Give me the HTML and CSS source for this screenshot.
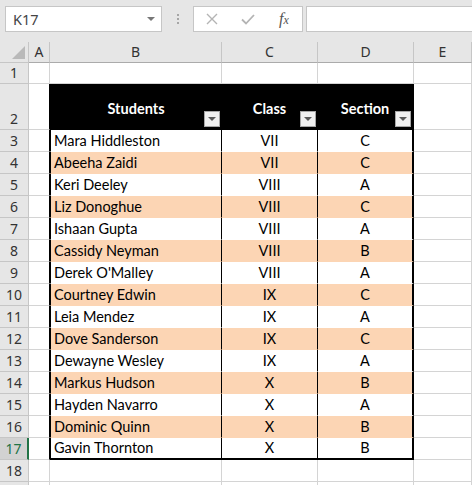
FILE: index.html
```html
<!DOCTYPE html>
<html>
<head>
<meta charset="utf-8">
<link rel="stylesheet" href="styles.css">
</head>
<body>
<div class="toolbar">
  <div class="namebox"><span class="nb-text">K17</span><span class="nb-arrow"></span></div>
  <div class="sep"><span></span><span></span><span></span></div>
  <div class="fbtns">
    <svg class="ico" width="12" height="12" viewBox="0 0 12 12"><path d="M1 1 L11 11 M11 1 L1 11" stroke="#b4b4b4" stroke-width="1.4" fill="none"/></svg>
    <svg class="ico" width="14" height="12" viewBox="0 0 14 12"><path d="M1 6.5 L5 10.5 L13 2" stroke="#b4b4b4" stroke-width="1.8" fill="none"/></svg>
    <span class="fx">f<span class="fx-x">x</span></span>
  </div>
  <div class="formula"></div>
</div>
<div class="sheet">
  <div class="row hdr">
    <div class="rh corner"><span class="tri"></span></div>
    <div class="ch">A</div><div class="ch">B</div><div class="ch">C</div><div class="ch">D</div><div class="ch">E</div>
  </div>
  <div class="row r1">
    <div class="rh">1</div><div class="c"></div><div class="c"></div><div class="c"></div><div class="c"></div><div class="c"></div>
  </div>
  <div class="row r2">
    <div class="rh">2</div><div class="c edge"></div>
    <div class="c th tb">Students<span class="dd"></span></div>
    <div class="c th tc">Class<span class="dd"></span></div>
    <div class="c th td">Section<span class="dd"></span></div>
    <div class="c"></div>
  </div>
  <div class="row"><div class="rh">3</div><div class="c edge"></div><div class="c t tb">Mara Hiddleston</div><div class="c t tc">VII</div><div class="c t td">C</div><div class="c"></div></div>
  <div class="row alt"><div class="rh">4</div><div class="c edge"></div><div class="c t tb">Abeeha Zaidi</div><div class="c t tc">VII</div><div class="c t td">C</div><div class="c"></div></div>
  <div class="row"><div class="rh">5</div><div class="c edge"></div><div class="c t tb">Keri Deeley</div><div class="c t tc">VIII</div><div class="c t td">A</div><div class="c"></div></div>
  <div class="row alt"><div class="rh">6</div><div class="c edge"></div><div class="c t tb">Liz Donoghue</div><div class="c t tc">VIII</div><div class="c t td">C</div><div class="c"></div></div>
  <div class="row"><div class="rh">7</div><div class="c edge"></div><div class="c t tb">Ishaan Gupta</div><div class="c t tc">VIII</div><div class="c t td">A</div><div class="c"></div></div>
  <div class="row alt"><div class="rh">8</div><div class="c edge"></div><div class="c t tb">Cassidy Neyman</div><div class="c t tc">VIII</div><div class="c t td">B</div><div class="c"></div></div>
  <div class="row"><div class="rh">9</div><div class="c edge"></div><div class="c t tb">Derek O'Malley</div><div class="c t tc">VIII</div><div class="c t td">A</div><div class="c"></div></div>
  <div class="row alt"><div class="rh">10</div><div class="c edge"></div><div class="c t tb">Courtney Edwin</div><div class="c t tc">IX</div><div class="c t td">C</div><div class="c"></div></div>
  <div class="row"><div class="rh">11</div><div class="c edge"></div><div class="c t tb">Leia Mendez</div><div class="c t tc">IX</div><div class="c t td">A</div><div class="c"></div></div>
  <div class="row alt"><div class="rh">12</div><div class="c edge"></div><div class="c t tb">Dove Sanderson</div><div class="c t tc">IX</div><div class="c t td">C</div><div class="c"></div></div>
  <div class="row"><div class="rh">13</div><div class="c edge"></div><div class="c t tb">Dewayne Wesley</div><div class="c t tc">IX</div><div class="c t td">A</div><div class="c"></div></div>
  <div class="row alt"><div class="rh">14</div><div class="c edge"></div><div class="c t tb">Markus Hudson</div><div class="c t tc">X</div><div class="c t td">B</div><div class="c"></div></div>
  <div class="row"><div class="rh">15</div><div class="c edge"></div><div class="c t tb">Hayden Navarro</div><div class="c t tc">X</div><div class="c t td">A</div><div class="c"></div></div>
  <div class="row alt"><div class="rh">16</div><div class="c edge"></div><div class="c t tb">Dominic Quinn</div><div class="c t tc">X</div><div class="c t td">B</div><div class="c"></div></div>
  <div class="row last"><div class="rh sel">17</div><div class="c edge"></div><div class="c t tb">Gavin Thornton</div><div class="c t tc">X</div><div class="c t td">B</div><div class="c"></div></div>
  <div class="row"><div class="rh">18</div><div class="c"></div><div class="c"></div><div class="c"></div><div class="c"></div><div class="c"></div></div>
  <div class="row"><div class="rh"></div><div class="c"></div><div class="c"></div><div class="c"></div><div class="c"></div><div class="c"></div></div>
</div>
</body>
</html>
```
FILE: styles.css
```css
* { box-sizing: border-box; }
html, body { margin: 0; padding: 0; }
body {
  width: 472px;
  height: 485px;
  overflow: hidden;
  background: #e6e6e6;
  font-family: "Noto Sans", "Open Sans", sans-serif;
}
.toolbar {
  height: 42px;
  display: flex;
  align-items: flex-start;
  padding: 6px 0 0 5px;
}
.namebox {
  width: 157px;
  height: 26px;
  background: #fff;
  border: 1px solid #c6c6c6;
  display: flex;
  align-items: center;
  justify-content: space-between;
  padding: 0 6px 0 7px;
}
.nb-text {
  font-size: 14.5px;
  color: #444;
  line-height: 1;
}
.nb-arrow {
  width: 0; height: 0;
  border-left: 4px solid transparent;
  border-right: 4px solid transparent;
  border-top: 4px solid #777;
}
.sep {
  width: 31px;
  height: 26px;
  display: flex;
  flex-direction: column;
  align-items: center;
  justify-content: center;
  gap: 2px;
}
.sep span {
  width: 2px; height: 2px;
  background: #a6a6a6;
}
.fbtns {
  width: 110px;
  height: 26px;
  background: #fff;
  border: 1px solid #c6c6c6;
  display: flex;
  align-items: center;
  padding-left: 12px;
}
.fbtns .ico:first-child { margin-right: 23px; }
.fbtns .ico:nth-child(2) { margin-right: 24px; }
.fx {
  font-family: "Liberation Serif", serif;
  font-style: italic;
  font-size: 16px;
  color: #555;
  line-height: 1;
}
.fx-x { font-size: 12px; }
.formula {
  flex: 1;
  height: 26px;
  margin-left: 3px;
  background: #fff;
  border: 1px solid #c6c6c6;
  border-right: none;
}
.sheet { background: #fff; }
.row {
  display: grid;
  grid-template-columns: 29px 21px 172px 96px 96px 58px;
  height: 22px;
}
.row.hdr { height: 21px; }
.row.r1 { height: 21px; }
.row.r2 { height: 46px; }
.rh {
  background: #e6e6e6;
  border-right: 1px solid #c6c6c6;
  border-bottom: 1px solid #c6c6c6;
  font-size: 14px;
  color: #333;
  display: flex;
  align-items: flex-end;
  justify-content: center;
  line-height: 19px;
  padding-bottom: 1px;
}
.rh.sel {
  background: #d2d2d2;
  color: #217346;
  border-right: 2px solid #217346;
}
.corner { position: relative; }
.tri {
  position: absolute;
  right: 3px;
  bottom: 3px;
  width: 0; height: 0;
  border-left: 13px solid transparent;
  border-bottom: 13px solid #b9b9b9;
}
.ch {
  background: #e6e6e6;
  border-right: 1px solid #c6c6c6;
  border-bottom: 1px solid #ababab;
  font-size: 14px;
  color: #333;
  display: flex;
  align-items: center;
  justify-content: center;
  line-height: 1;
}
.c {
  border-right: 1px solid #d4d4d4;
  border-bottom: 1px solid #d4d4d4;
  font-family: Lato, "Liberation Sans", sans-serif;
  font-size: 14.5px;
  color: #000;
  display: flex;
  align-items: flex-end;
  line-height: 20px;
  padding-bottom: 0;
}
.c.edge { border-right-color: #000; }
.c.t { border-bottom-color: transparent; background: #fff; }
.row.alt .c.t { background: #fcd5b4; }
.c.tb { border-left: 1px solid #000; border-right-color: #000; padding-left: 3px; }
.c.tc { border-right-color: #000; justify-content: center; }
.c.td { border-right: 2px solid #000; justify-content: center; }
.row.last .c.t { border-bottom: 2px solid #000; }
.c.th {
  position: relative;
  background: #000;
  color: #fff;
  font-weight: bold;
  border-bottom-color: #000;
  justify-content: center;
  align-items: center;
  padding: 4px 0 0 0;
}
.c.th.tb { padding-left: 0; }
.dd {
  position: absolute;
  right: 1px;
  bottom: 2px;
  width: 16px;
  height: 16px;
  background: #f0f0f0;
  border: 1px solid #a6a6a6;
}
.dd::after {
  content: "";
  position: absolute;
  left: 3px;
  top: 5px;
  width: 0; height: 0;
  border-left: 4px solid transparent;
  border-right: 4px solid transparent;
  border-top: 4px solid #5a5a5a;
}
```
